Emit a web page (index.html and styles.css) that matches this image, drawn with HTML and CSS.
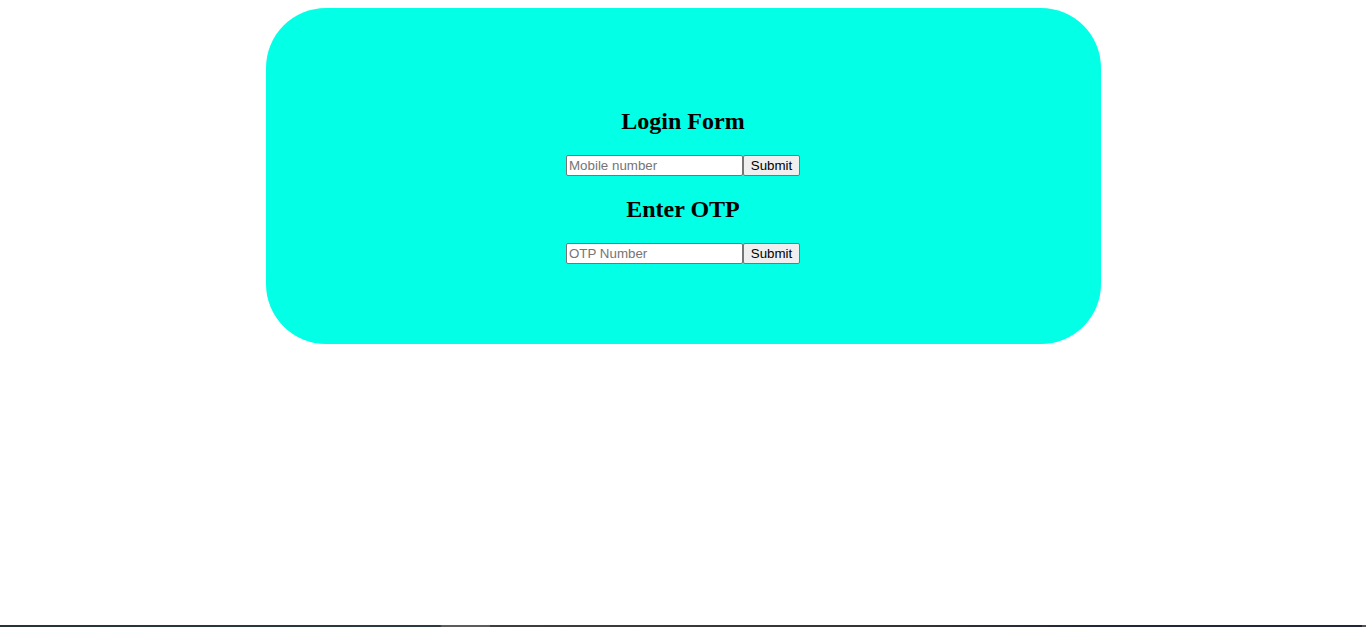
FILE: index.html
```html
<!DOCTYPE html>
<html lang="en">
<head>
<meta charset="utf-8">
<title>Login Form</title>
<link rel="stylesheet" href="styles.css">
</head>
<body>
<div class="card">
  <h2 class="title">Login Form</h2>
  <form class="row">
    <input class="field" type="text" placeholder="Mobile number"><button class="btn" type="button">Submit</button>
  </form>
  <h2 class="title">Enter OTP</h2>
  <form class="row">
    <input class="field" type="text" placeholder="OTP Number"><button class="btn" type="button">Submit</button>
  </form>
</div>
<div class="edge"></div>
</body>
</html>
```
FILE: styles.css
```css
html, body {
  background: #ffffff;
}
body {
  margin: 8px;
  font-family: "Liberation Serif", "Times New Roman", serif;
}
.card {
  width: 835px;
  box-sizing: border-box;
  margin: 0 auto;
  padding: 80px 0;
  background: #03ffe6;
  border-radius: 60px;
  text-align: center;
}
.title {
  font-family: "Liberation Serif", "Times New Roman", serif;
  font-size: 24px;
  font-weight: bold;
  color: #000;
  margin: 19.92px 0;
}
.row {
  margin: 0;
  display: flex;
  justify-content: center;
}
.field {
  box-sizing: border-box;
  width: 177px;
  height: 21px;
  margin: 0;
  padding: 1px 2px;
  border: 1px solid #767676;
  border-radius: 2px;
  background: #fff;
  font-family: "Liberation Sans", Arial, sans-serif;
  font-size: 13.333px;
  color: #000;
}
.field::placeholder {
  color: #757575;
}
.btn {
  box-sizing: border-box;
  width: 57px;
  height: 21px;
  margin: 0;
  padding: 1px 6px;
  border: 1px solid #767676;
  border-radius: 2px;
  background: #efefef;
  font-family: "Liberation Sans", Arial, sans-serif;
  font-size: 13.333px;
  color: #000;
}
.edge {
  position: fixed;
  left: 0;
  right: 0;
  bottom: 0;
  height: 2px;
  background: linear-gradient(to right, #263238 0, #2b3a40 440px, #5b5b5b 442px, #5b5b5b 490px, #3d3d3d 490px, #333 900px, #1f2636 1100px, #1f2636 1362px, #555 1362px);
}
```
